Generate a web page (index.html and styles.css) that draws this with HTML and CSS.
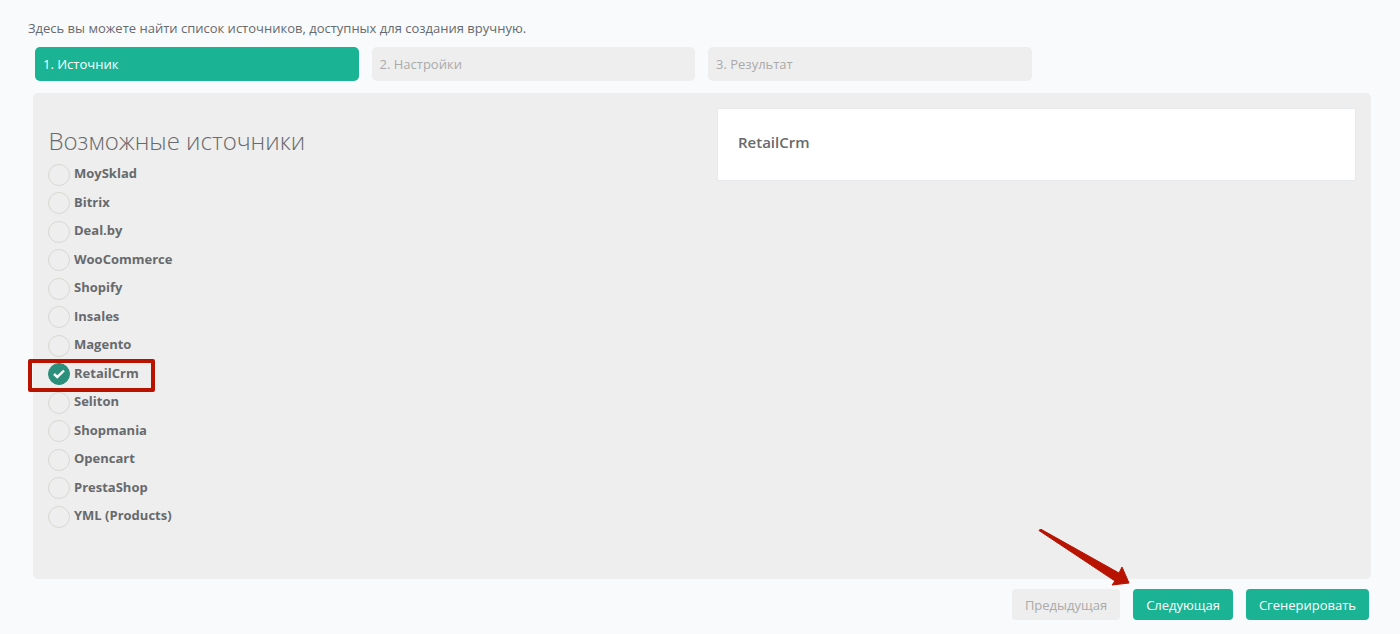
FILE: index.html
```html
<!DOCTYPE html>
<html lang="ru">
<head>
<meta charset="utf-8">
<title>Источники</title>
<link rel="stylesheet" href="styles.css">
</head>
<body>
<main class="page">
  <p class="intro">Здесь вы можете найти список источников, доступных для создания вручную.</p>
  <div class="steps">
    <div class="step step-active">1. Источник</div>
    <div class="step">2. Настройки</div>
    <div class="step">3. Результат</div>
  </div>
  <section class="panel">
    <div class="col-left">
      <h2 class="title">Возможные источники</h2>
      <ul class="sources">
        <li class="source"><span class="radio"></span><span>MoySklad</span></li>
        <li class="source"><span class="radio"></span><span>Bitrix</span></li>
        <li class="source"><span class="radio"></span><span>Deal.by</span></li>
        <li class="source"><span class="radio"></span><span>WooCommerce</span></li>
        <li class="source"><span class="radio"></span><span>Shopify</span></li>
        <li class="source"><span class="radio"></span><span>Insales</span></li>
        <li class="source"><span class="radio"></span><span>Magento</span></li>
        <li class="source source-on"><span class="radio radio-on"><svg width="12" height="10" viewBox="0 0 12 10"><path d="M1 5 4.300 8 11 1.500" fill="none" stroke="#fff" stroke-width="2.400"/></svg></span><span>RetailCrm</span><span class="mark"></span></li>
        <li class="source"><span class="radio"></span><span>Seliton</span></li>
        <li class="source"><span class="radio"></span><span>Shopmania</span></li>
        <li class="source"><span class="radio"></span><span>Opencart</span></li>
        <li class="source"><span class="radio"></span><span>PrestaShop</span></li>
        <li class="source"><span class="radio"></span><span>YML (Products)</span></li>
      </ul>
    </div>
    <div class="col-right">
      <div class="card">RetailCrm</div>
    </div>
  </section>
  <div class="actions">
    <button class="btn btn-off" type="button">Предыдущая</button>
    <button class="btn" type="button">Следующая</button>
    <button class="btn" type="button">Сгенерировать</button>
    <svg class="arrow" width="100" height="60" viewBox="0 0 100 60"><path d="M1 1.500 2.500 0 81 44 84 38 91 54 74 56 77 52Z" fill="#b81300" stroke="#b81300" stroke-width="1" stroke-linejoin="round"/></svg>
  </div>
</main>
</body>
</html>
```

FILE: styles.css
```css
* { box-sizing: border-box; }
html, body { margin: 0; height: 100%; }
body {
  background: #f9fafc;
  font-family: "Open Sans", "Liberation Sans", sans-serif;
  font-size: 13px;
  color: #676a6c;
  overflow: hidden;
}
.page { padding: 18px 29px 0 33px; }
.intro {
  margin: 0 0 9px -5px;
  height: 20px;
  line-height: 20px;
  font-size: 13px;
}
.steps { display: flex; gap: 13px; padding-left: 2px; margin-bottom: 12px; }
.step {
  width: 323.500px;
  height: 34px;
  line-height: 34px;
  padding-left: 8px;
  background: #eee;
  border-radius: 5px;
  color: #aaa;
}
.step-active { background: #1ab394; color: #fff; }
.panel {
  display: flex;
  height: 486px;
  background: #eee;
  border-radius: 5px;
  padding: 15px;
}
.col-left { width: 669px; flex: none; }
.col-right { flex: 1; }
.title {
  margin: 16px 0 0 0.500px;
  font-size: 24px;
  font-weight: 300;
  line-height: 33px;
  color: #676a6c;
}
.sources { list-style: none; margin: 2px 0 0; padding: 0; }
.source {
  position: relative;
  display: flex;
  align-items: center;
  gap: 4px;
  height: 28.500px;
  font-weight: 700;
}
.radio {
  flex: none;
  display: flex;
  align-items: center;
  justify-content: center;
  width: 22px;
  height: 22px;
  border: 1px solid #d8d8d2;
  border-radius: 50%;
  margin-top: 3px;
}
.radio-on { background: #2c8f7b; border-color: #2c8f7b; }
.mark {
  position: absolute;
  left: -20px;
  top: 0.500px;
  width: 127px;
  height: 33px;
  border: 4px solid #b81300;
  border-radius: 2px;
}
.card {
  height: 73px;
  line-height: 66px;
  padding-left: 20px;
  background: #fff;
  border: 1px solid #e7eaec;
  font-size: 15px;
  font-weight: 600;
}
.actions {
  position: relative;
  display: flex;
  justify-content: flex-end;
  gap: 13px;
  padding-top: 10px;
  padding-right: 2px;
}
.btn {
  height: 31px;
  padding: 0 13px;
  border: 0;
  border-radius: 4px;
  background: #1ab394;
  color: #fff;
  font: 13px "Open Sans", "Liberation Sans", sans-serif;
}
.btn-off { background: #eee; color: #aaa; }
.arrow { position: absolute; left: 1005px; top: -50px; }
```
